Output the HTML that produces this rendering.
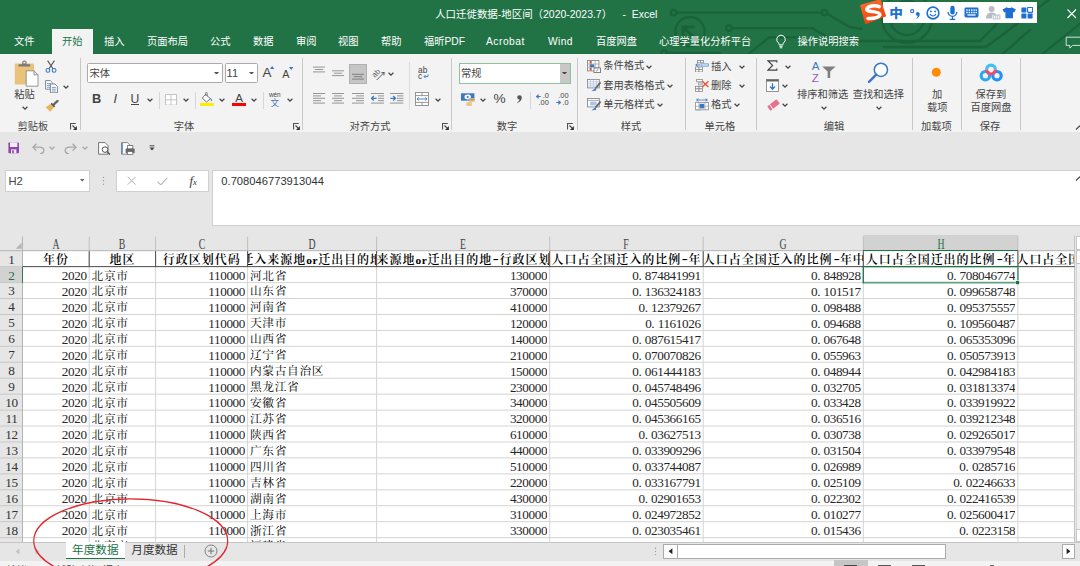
<!DOCTYPE html>
<html lang="zh-CN"><head><meta charset="utf-8"><title>人口迁徙数据-地区间（2020-2023.7） - Excel</title>
<style>
html,body{margin:0;padding:0;background:#e6e6e6;}
body{width:1080px;height:566px;overflow:hidden;}
#app{position:relative;width:1080px;height:566px;overflow:hidden;background:#e6e6e6;font-family:"Liberation Sans","Noto Sans CJK SC",sans-serif;font-size:10.4px;color:#444;}
.a{position:absolute;display:block;}
.t{position:absolute;display:block;white-space:nowrap;line-height:16px;height:16px;}
.u{font-size:10.25px;color:#444;}
.w{font-size:10.25px;color:#fff;}
.g{font-size:10.25px;color:#217346;}
.s{font-family:"Liberation Serif","Noto Serif CJK SC",serif;font-size:12.2px;color:#000;}
.sh{font-family:"Liberation Serif","Noto Serif CJK SC",serif;font-size:12.2px;color:#444;}
.cell{position:absolute;overflow:hidden;white-space:nowrap;font-family:"Liberation Serif","Noto Serif CJK SC",serif;font-size:11.7px;letter-spacing:0.7px;color:#000;line-height:16px;height:15.94px;}
.r{text-align:right;}
.c{text-align:center;}
.b{font-weight:600;font-size:12px;letter-spacing:0.97px;}
.n{text-align:right;font-size:13.2px;letter-spacing:-0.4px;color:#262626;}
.p{display:inline-block;width:6.4px;text-align:left;}
.l{display:inline-block;position:relative;top:-1.1px;letter-spacing:0;padding:0 1.7px;transform:scaleX(1.5);}
.l0{letter-spacing:0.6px;font-weight:bold;font-size:11.4px;}

</style></head>
<body>
<div id="app">
<div class="a" style="left:0px;top:0px;width:1080px;height:54.3px;background:#217346;"></div>
<svg class="a" style="left:0px;top:0px" width="1080" height="54.5" viewBox="0 0 1080 54.5">
<g fill="none" stroke="#1a6239" stroke-width="2.3" stroke-linecap="round" stroke-linejoin="round">
<path d="M676.6 12.6 H821.4"/><circle cx="673.6" cy="12.6" r="2.8"/><circle cx="824.4" cy="12.6" r="2.8"/>
<path d="M827 13.6 L846 25 Q852 28.6 862 28.6"/>
<path d="M732 28.1 H812 L834 41 H980 L1012 8"/><circle cx="729" cy="28.1" r="2.8"/>
<circle cx="690" cy="31.6" r="14.6"/>
<path d="M746 56 L769 37.4 H800"/>
<path d="M667 53 H720"/><circle cx="664" cy="53" r="2.6"/>
<circle cx="907" cy="18" r="25"/><circle cx="907" cy="18" r="17"/>
<path d="M884 47 H986 L1054 -4"/>
<path d="M1040 56 L1082 22"/>
<path d="M1000 56 L1030 30"/>
</g>
<path d="M683 27 H693 M683 27 V37 M683.6 27.6 L696 39" stroke="#1a6239" stroke-width="3" fill="none" stroke-linecap="square"/>
<circle cx="914.6" cy="22.6" r="2.6" fill="#2a7d50"/>
</svg>
<span class="t w" style="left:435.2px;top:7.4px;font-size:10.45px;">人口迁徙数据-地区间（2020-2023.7）<span style="padding-left:4.6px">&nbsp; - &nbsp;</span>Excel</span>
<div class="a" style="left:52px;top:29px;width:41px;height:26px;background:#f3f3f3;"></div>
<span class="t w" style="left:14px;top:34.2px;">文件</span>
<span class="t w" style="left:104px;top:34.2px;">插入</span>
<span class="t w" style="left:147px;top:34.2px;">页面布局</span>
<span class="t w" style="left:210px;top:34.2px;">公式</span>
<span class="t w" style="left:253px;top:34.2px;">数据</span>
<span class="t w" style="left:296px;top:34.2px;">审阅</span>
<span class="t w" style="left:338px;top:34.2px;">视图</span>
<span class="t w" style="left:381px;top:34.2px;">帮助</span>
<span class="t w" style="left:424px;top:34.2px;">福昕PDF</span>
<span class="t w" style="left:486px;top:34.2px;"><span style="letter-spacing:0.5px">Acrobat</span></span>
<span class="t w" style="left:548px;top:34.2px;"><span style="letter-spacing:0.4px">Wind</span></span>
<span class="t w" style="left:596px;top:34.2px;">百度网盘</span>
<span class="t w" style="left:659px;top:34.2px;">心理学量化分析平台</span>
<span class="t w" style="left:797.5px;top:34.2px;">操作说明搜索</span>
<span class="t g" style="left:62px;top:34.2px;">开始</span>
<svg class="a" style="left:774px;top:33px" width="14" height="18" viewBox="0 0 14 18"><path d="M7 2.2a4.3 4.3 0 0 0-2.6 7.7c.5.5.8 1.2.8 2h3.6c0-.8.3-1.5.8-2A4.3 4.3 0 0 0 7 2.2z M5.4 13.3h3.2 M5.8 14.8h2.4" fill="none" stroke="#fff" stroke-width="1"/></svg>
<svg class="a" style="left:1064.6px;top:35.6px" width="19" height="15" viewBox="0 0 19 15"><path d="M1.2 1.2 H18.5 V9.4 H7.6 L4.8 12 V9.4 H1.2 Z" fill="none" stroke="#e4efe8" stroke-width="0.9"/></svg>
<svg class="a" style="left:1066px;top:8px" width="12" height="12" viewBox="0 0 12 12"><path d="M1.5 1.5 L10 10 M10 1.5 L1.5 10" stroke="#fff" stroke-width="1.1" fill="none"/></svg>
<div class="a" style="left:882.5px;top:2px;width:154.5px;height:21px;background:#fff;"></div>
<svg class="a" style="left:858px;top:0px" width="30" height="25" viewBox="0 0 30 25"><defs><linearGradient id="sg" x1="0" y1="0" x2="0.4" y2="1"><stop offset="0" stop-color="#ff6d2e"/><stop offset="1" stop-color="#ee4510"/></linearGradient></defs>
<path d="M3.6 5.8 L21.8 0.8 L26.6 15.6 L8.2 22.6Z" fill="url(#sg)" stroke="url(#sg)" stroke-width="2.6" stroke-linejoin="round"/>
<path d="M21.2 6.6 C17 4.8 10 5.8 8.8 9 C7.8 12.4 20.8 10.8 21.8 14.2 C22.6 17.4 15 18.8 10 18.4" fill="none" stroke="#fff" stroke-width="3.5" stroke-linecap="round"/></svg>
<span class="t " style="left:745.5px;width:300px;text-align:center;top:5.9px;font-size:12.4px;font-weight:900;color:#1d6fd1;transform:scaleX(1.1);">中</span>
<svg class="a" style="left:908.8px;top:7px" width="13" height="14" viewBox="0 0 13 14"><circle cx="3.2" cy="4.2" r="1.6" fill="none" stroke="#1d6fd1" stroke-width="1.1"/><path d="M6.8 6.9 a2 2 0 1 1 3.9 .8 c-.4 2-1.5 3.4-3.6 4.3 c1.1-1.2 1.6-2.3 1.5-3.2 a2 2 0 0 1-1.8-1.9z" fill="#1d6fd1"/></svg>
<svg class="a" style="left:926.3px;top:6.3px" width="14" height="14" viewBox="0 0 14 14"><circle cx="7" cy="7" r="5.9" fill="none" stroke="#1d6fd1" stroke-width="1.6"/><circle cx="4.9" cy="5.4" r="0.95" fill="#1d6fd1"/><circle cx="9.1" cy="5.4" r="0.95" fill="#1d6fd1"/><path d="M3.9 8.2 Q7 11.8 10.1 8.2" fill="none" stroke="#1d6fd1" stroke-width="1.2"/></svg>
<svg class="a" style="left:946px;top:4.5px" width="13" height="16" viewBox="0 0 13 16"><rect x="4.3" y="0.8" width="4.4" height="8.6" rx="2.2" fill="#1d6fd1"/><path d="M2.2 7 a4.3 4.3 0 0 0 8.6 0 M6.5 11.4 V14 M3.8 14.4 H9.2" fill="none" stroke="#1d6fd1" stroke-width="1.3"/></svg>
<svg class="a" style="left:964px;top:7px" width="15" height="11" viewBox="0 0 15 11"><rect x="0.5" y="0.5" width="14" height="10" rx="1.4" fill="#1d6fd1"/><g fill="#fff"><rect x="2.2" y="2.4" width="1.5" height="1.4"/><rect x="4.6" y="2.4" width="1.5" height="1.4"/><rect x="7" y="2.4" width="1.5" height="1.4"/><rect x="9.4" y="2.4" width="1.5" height="1.4"/><rect x="11.6" y="2.4" width="1.3" height="1.4"/><rect x="2.2" y="4.8" width="1.5" height="1.4"/><rect x="4.6" y="4.8" width="1.5" height="1.4"/><rect x="7" y="4.8" width="1.5" height="1.4"/><rect x="9.4" y="4.8" width="1.5" height="1.4"/><rect x="11.6" y="4.8" width="1.3" height="1.4"/><rect x="3.4" y="7.3" width="8.2" height="1.3"/></g></svg>
<svg class="a" style="left:984px;top:5px" width="17" height="15" viewBox="0 0 17 15"><circle cx="7.6" cy="4" r="3" fill="#b9bcc2"/><path d="M2 13.5 C2 9 5 7.6 7.6 7.6 C10.2 7.6 12 8.6 12.6 10 H8 V13.5Z" fill="#b9bcc2"/><rect x="8.6" y="9.6" width="8" height="5" rx="0.8" fill="#c9ccd1"/><path d="M10.5 11 v2.4 M12.6 11 v2.4 M14.6 11 v2.4" stroke="#fff" stroke-width="0.9"/></svg>
<svg class="a" style="left:1001.8px;top:5.6px" width="14.4" height="13.6" viewBox="0 0 16 14"><path d="M5.3 0.8 Q8 2.8 10.7 0.8 L15.4 3.4 L13.6 6.8 L12.2 6.1 V13 H3.8 V6.1 L2.4 6.8 L0.6 3.4Z" fill="#1d6fd1"/></svg>
<svg class="a" style="left:1021px;top:6.5px" width="12" height="12" viewBox="0 0 12 12"><rect x="0.4" y="0.4" width="5" height="5" rx="0.6" fill="#1d6fd1"/><rect x="6.6" y="0.4" width="5" height="5" rx="0.6" fill="none" stroke="#1d6fd1" stroke-width="1.1"/><rect x="0.4" y="6.6" width="5" height="5" rx="0.6" fill="#1d6fd1"/><rect x="6.6" y="6.6" width="5" height="5" rx="0.6" fill="#1d6fd1"/></svg>
<div class="a" style="left:0px;top:54.3px;width:1080px;height:78.2px;background:#f3f3f3;"></div>
<div class="a" style="left:80.0px;top:57.5px;width:1px;height:72.5px;background:#c8c8c8;"></div>
<div class="a" style="left:302.0px;top:57.5px;width:1px;height:72.5px;background:#c8c8c8;"></div>
<div class="a" style="left:451.25px;top:57.5px;width:1px;height:72.5px;background:#c8c8c8;"></div>
<div class="a" style="left:577.0px;top:57.5px;width:1px;height:72.5px;background:#c8c8c8;"></div>
<div class="a" style="left:685.25px;top:57.5px;width:1px;height:72.5px;background:#c8c8c8;"></div>
<div class="a" style="left:755.75px;top:57.5px;width:1px;height:72.5px;background:#c8c8c8;"></div>
<div class="a" style="left:912.0px;top:57.5px;width:1px;height:72.5px;background:#c8c8c8;"></div>
<div class="a" style="left:960.75px;top:57.5px;width:1px;height:72.5px;background:#c8c8c8;"></div>
<div class="a" style="left:1019.5px;top:57.5px;width:1px;height:72.5px;background:#c8c8c8;"></div>
<div class="a" style="left:409px;top:62px;width:1px;height:48px;background:#dcdcdc;"></div>
<span class="t u" style="left:-117px;width:300px;text-align:center;top:119.1px;">剪贴板</span>
<span class="t u" style="left:34px;width:300px;text-align:center;top:119.1px;">字体</span>
<span class="t u" style="left:220px;width:300px;text-align:center;top:119.1px;">对齐方式</span>
<span class="t u" style="left:357px;width:300px;text-align:center;top:119.1px;">数字</span>
<span class="t u" style="left:481px;width:300px;text-align:center;top:119.1px;">样式</span>
<span class="t u" style="left:570px;width:300px;text-align:center;top:119.1px;">单元格</span>
<span class="t u" style="left:684px;width:300px;text-align:center;top:119.1px;">编辑</span>
<span class="t u" style="left:786.5px;width:300px;text-align:center;top:119.1px;">加载项</span>
<span class="t u" style="left:840px;width:300px;text-align:center;top:119.1px;">保存</span>
<svg class="a" style="left:70.2px;top:123px" width="7.2" height="7.2" viewBox="0 0 7.2 7.2"><path d="M0.55 6.6 V0.55 H5.8" fill="none" stroke="#505050" stroke-width="1.1"/><path d="M2.5 2.5 L5.2 5.2" fill="none" stroke="#444" stroke-width="1.2"/><path d="M6.9 3 V6.9 H3Z" fill="#333"/></svg>
<svg class="a" style="left:293.0px;top:123px" width="7.2" height="7.2" viewBox="0 0 7.2 7.2"><path d="M0.55 6.6 V0.55 H5.8" fill="none" stroke="#505050" stroke-width="1.1"/><path d="M2.5 2.5 L5.2 5.2" fill="none" stroke="#444" stroke-width="1.2"/><path d="M6.9 3 V6.9 H3Z" fill="#333"/></svg>
<svg class="a" style="left:441.9px;top:123px" width="7.2" height="7.2" viewBox="0 0 7.2 7.2"><path d="M0.55 6.6 V0.55 H5.8" fill="none" stroke="#505050" stroke-width="1.1"/><path d="M2.5 2.5 L5.2 5.2" fill="none" stroke="#444" stroke-width="1.2"/><path d="M6.9 3 V6.9 H3Z" fill="#333"/></svg>
<svg class="a" style="left:567.4px;top:123px" width="7.2" height="7.2" viewBox="0 0 7.2 7.2"><path d="M0.55 6.6 V0.55 H5.8" fill="none" stroke="#505050" stroke-width="1.1"/><path d="M2.5 2.5 L5.2 5.2" fill="none" stroke="#444" stroke-width="1.2"/><path d="M6.9 3 V6.9 H3Z" fill="#333"/></svg>
<svg class="a" style="left:1074.6px;top:124.4px" width="9" height="7" viewBox="0 0 9 7"><path d="M1 5.5 L4.5 2 L8 5.5" fill="none" stroke="#444" stroke-width="1.1"/></svg>
<svg class="a" style="left:14px;top:60px" width="25" height="27" viewBox="0 0 25 27"><rect x="0.8" y="3.6" width="19.2" height="20.8" rx="1" fill="#eac27a"/>
<path d="M4.6 6.6 V4.2 H8.2 V2.2 Q8.2 0.6 10.4 0.6 Q12.6 0.6 12.6 2.2 V4.2 H16.2 V6.6Z" fill="#7a7a7a"/><rect x="9.4" y="1.8" width="2" height="1.6" fill="#f3f3f3"/>
<path d="M12.2 10.8 H20 L24 14.8 V26.2 H12.2Z" fill="#fff" stroke="#8a8a8a" stroke-width="0.9"/><path d="M20 10.8 V14.8 H24" fill="none" stroke="#8a8a8a" stroke-width="0.9"/></svg>
<span class="t u" style="left:-125.6px;width:300px;text-align:center;top:87.2px;">粘贴</span>
<svg class="a" style="left:21.1px;top:104.7px" width="8" height="6" viewBox="0 0 8 6"><path d="M1.6 1.8 L4 4.2 L6.4 1.8" fill="none" stroke="#444" stroke-width="1.25"/></svg>
<svg class="a" style="left:44.5px;top:60px" width="12" height="13" viewBox="0 0 12 13"><path d="M2.6 0.6 L8.2 9 M9.4 0.6 L3.8 9" stroke="#555" stroke-width="1.1" fill="none"/>
<circle cx="2.9" cy="10.4" r="1.9" fill="none" stroke="#3b78c4" stroke-width="1.1"/><circle cx="9.1" cy="10.4" r="1.9" fill="none" stroke="#3b78c4" stroke-width="1.1"/></svg>
<svg class="a" style="left:44.5px;top:79.8px" width="13" height="13.4" viewBox="0 0 13 13.4"><path d="M0.6 0.6 H5.2 L7.6 3 V9.2 H0.6Z" fill="#fff" stroke="#777" stroke-width="0.9"/>
<path d="M2 3.6 H5.8 M2 5.4 H5.8 M2 7.2 H5.8" stroke="#4a86d0" stroke-width="0.8"/>
<path d="M5.4 4 H10 L12.4 6.4 V12.8 H5.4Z" fill="#fff" stroke="#777" stroke-width="0.9"/>
<path d="M6.8 7.4 H10.8 M6.8 9.2 H10.8 M6.8 11 H10.8" stroke="#4a86d0" stroke-width="0.8"/></svg>
<svg class="a" style="left:62px;top:84.2px" width="8" height="6" viewBox="0 0 8 6"><path d="M1.6 1.8 L4 4.2 L6.4 1.8" fill="none" stroke="#444" stroke-width="1.25"/></svg>
<svg class="a" style="left:44.5px;top:100px" width="14" height="12.5" viewBox="0 0 14 12.5"><path d="M8.6 4.6 L12.6 0.9" stroke="#666" stroke-width="2.2" stroke-linecap="round"/>
<path d="M6.2 3.4 L9.6 6.8" stroke="#555" stroke-width="1.8"/>
<path d="M5.4 4 L9 7.6 L5.2 11.8 L0.6 7.2Z" fill="#eab45f"/></svg>
<div class="a" style="left:87.4px;top:63.3px;width:135.8px;height:20.2px;background:#fff;border:1px solid #ababab;box-sizing:border-box;border-radius:1.5px;"></div>
<span class="t u" style="left:89.4px;top:65.6px;">宋体</span>
<svg class="a" style="left:214.4px;top:71.6px" width="5" height="2.8" viewBox="0 0 5 2.8"><path d="M0 0 H5 L2.5 2.8 Z" fill="#555"/></svg>
<div class="a" style="left:224.9px;top:63.3px;width:32.7px;height:20.2px;background:#fff;border:1px solid #ababab;box-sizing:border-box;border-radius:1.5px;"></div>
<span class="t u" style="left:226.6px;top:65.4px;font-size:11px;">11</span>
<svg class="a" style="left:248.5px;top:71.6px" width="5" height="2.8" viewBox="0 0 5 2.8"><path d="M0 0 H5 L2.5 2.8 Z" fill="#555"/></svg>
<span class="t u" style="left:117px;width:300px;text-align:center;top:65.4px;font-size:13.4px;">A</span>
<svg class="a" style="left:269.6px;top:66.4px" width="4.4" height="3" viewBox="0 0 4.4 3"><path d="M0 3 L2.2 0 L4.4 3Z" fill="#3b78c4"/></svg>
<span class="t u" style="left:135.8px;width:300px;text-align:center;top:66.2px;font-size:10.8px;">A</span>
<svg class="a" style="left:288.8px;top:66.6px" width="4.4" height="3" viewBox="0 0 4.4 3"><path d="M0 0 L2.2 3 L4.4 0Z" fill="#3b78c4"/></svg>
<span class="t u" style="left:-53.400000000000006px;width:300px;text-align:center;top:91.2px;font-size:12.8px;font-weight:bold;">B</span>
<span class="t u" style="left:-34.7px;width:300px;text-align:center;top:91.2px;font-size:12.8px;font-style:italic;">I</span>
<span class="t u" style="left:-15.199999999999989px;width:300px;text-align:center;top:90.9px;font-size:12.2px;">U</span>
<div class="a" style="left:130.9px;top:103.8px;width:7.8px;height:1px;background:#444;"></div>
<svg class="a" style="left:146.2px;top:97px" width="8" height="6" viewBox="0 0 8 6"><path d="M1.6 1.8 L4 4.2 L6.4 1.8" fill="none" stroke="#444" stroke-width="1.25"/></svg>
<div class="a" style="left:159.2px;top:91.5px;width:1px;height:17px;background:#d6d6d6;"></div>
<svg class="a" style="left:165px;top:93.5px" width="12" height="11.6" viewBox="0 0 12 11.6"><rect x="0.5" y="0.5" width="11" height="10.6" fill="#fff" stroke="#c4c4c4" stroke-width="1"/><path d="M6 0.5 V11.1 M0.5 5.8 H11.5" stroke="#c4c4c4" stroke-width="1"/></svg>
<svg class="a" style="left:182px;top:97px" width="8" height="6" viewBox="0 0 8 6"><path d="M1.6 1.8 L4 4.2 L6.4 1.8" fill="none" stroke="#444" stroke-width="1.25"/></svg>
<div class="a" style="left:195.2px;top:91.5px;width:1px;height:17px;background:#d6d6d6;"></div>
<svg class="a" style="left:200px;top:92px" width="14" height="14.2" viewBox="0 0 14 14.2"><path d="M5.4 2.4 L10.4 6.6 L6.6 10 L2.2 6.2Z" fill="#fff" stroke="#666" stroke-width="0.9"/>
<path d="M5.6 3.6 V1.2 Q5.6 0.4 6.4 0.4 Q7.2 0.4 7.2 1.2 V4" fill="none" stroke="#666" stroke-width="0.8"/>
<path d="M10.6 5.4 Q12.6 7.6 11.4 9.4 Q10.2 8.6 10.6 5.4Z" fill="#3b78c4"/>
<rect x="0" y="11" width="13.8" height="3" fill="#ffed00"/></svg>
<svg class="a" style="left:217.8px;top:97px" width="8" height="6" viewBox="0 0 8 6"><path d="M1.6 1.8 L4 4.2 L6.4 1.8" fill="none" stroke="#444" stroke-width="1.25"/></svg>
<span class="t u" style="left:89.1px;width:300px;text-align:center;top:89.6px;font-size:11.6px;">A</span>
<div class="a" style="left:232px;top:103px;width:13.8px;height:3px;background:#f00;"></div>
<svg class="a" style="left:249.6px;top:97px" width="8" height="6" viewBox="0 0 8 6"><path d="M1.6 1.8 L4 4.2 L6.4 1.8" fill="none" stroke="#444" stroke-width="1.25"/></svg>
<div class="a" style="left:262.6px;top:91.5px;width:1px;height:17px;background:#d6d6d6;"></div>
<span class="t u" style="left:124.80000000000001px;width:300px;text-align:center;top:87.0px;font-size:6.4px;">wén</span>
<span class="t " style="left:124.69999999999999px;width:300px;text-align:center;top:94.9px;font-size:8.6px;color:#3b78c4;">文</span>
<svg class="a" style="left:285.6px;top:97px" width="8" height="6" viewBox="0 0 8 6"><path d="M1.6 1.8 L4 4.2 L6.4 1.8" fill="none" stroke="#444" stroke-width="1.25"/></svg>
<svg class="a" style="left:313px;top:64px" width="12" height="20" viewBox="0 0 12 20"><path d="M0 3.1 H12 M1.8 5.5 H10.2 M0 7.9 H12 " stroke="#8a8a8a" stroke-width="0.9" fill="none"/></svg>
<svg class="a" style="left:332.4px;top:64px" width="12" height="20" viewBox="0 0 12 20"><path d="M0 6.8 H12 M1.8 9.2 H10.2 M0 11.6 H12 " stroke="#8a8a8a" stroke-width="0.9" fill="none"/></svg>
<div class="a" style="left:348.5px;top:64.2px;width:18.4px;height:19.5px;background:#c6c6c6;border:1px solid #b0b0b0;box-sizing:border-box;"></div>
<svg class="a" style="left:351.8px;top:64px" width="12" height="20" viewBox="0 0 12 20"><path d="M0 10.3 H12 M1.8 12.7 H10.2 M0 15.1 H12 " stroke="#777" stroke-width="0.9" fill="none"/></svg>
<svg class="a" style="left:371px;top:66px" width="14" height="14" viewBox="0 0 14 14"><g transform="rotate(-45 7 7)"><text x="1.2" y="8.2" font-family="Liberation Sans,sans-serif" font-size="7.6" fill="#555">ab</text><path d="M0.5 11 H11.5 M9.5 9.2 L11.8 11 L9.5 12.8" stroke="#555" stroke-width="0.9" fill="none"/></g></svg>
<svg class="a" style="left:386.5px;top:71px" width="8" height="6" viewBox="0 0 8 6"><path d="M1.6 1.8 L4 4.2 L6.4 1.8" fill="none" stroke="#444" stroke-width="1.25"/></svg>
<svg class="a" style="left:313px;top:93.2px" width="12" height="11" viewBox="0 0 12 11"><path d="M0 0.5 H12 M0 2.9 H8 M0 5.3 H12 M0 7.7 H8 M0 10.1 H12 " stroke="#8a8a8a" stroke-width="0.9" fill="none"/></svg>
<svg class="a" style="left:332.4px;top:93.2px" width="12" height="11" viewBox="0 0 12 11"><path d="M0 0.5 H12 M2 2.9 H10 M0 5.3 H12 M2 7.7 H10 M0 10.1 H12 " stroke="#8a8a8a" stroke-width="0.9" fill="none"/></svg>
<svg class="a" style="left:351.8px;top:93.2px" width="12" height="11" viewBox="0 0 12 11"><path d="M0 0.5 H12 M4 2.9 H12 M0 5.3 H12 M4 7.7 H12 M0 10.1 H12 " stroke="#8a8a8a" stroke-width="0.9" fill="none"/></svg>
<svg class="a" style="left:371px;top:93.2px" width="13.4" height="11" viewBox="0 0 13.4 11"><path d="M0 0.5 H13.4 M7 2.9 H13.4 M7 5.3 H13.4 M7 7.7 H13.4 M0 10.1 H13.4 " stroke="#8a8a8a" stroke-width="0.9" fill="none"/><path d="M0.6 5.3 H5.6 M2.8 3 L0.5 5.3 L2.8 7.6" stroke="#3b78c4" stroke-width="1.3" fill="none"/></svg>
<svg class="a" style="left:390.4px;top:93.2px" width="13.4" height="11" viewBox="0 0 13.4 11"><path d="M0 0.5 H13.4 M7 2.9 H13.4 M7 5.3 H13.4 M7 7.7 H13.4 M0 10.1 H13.4 " stroke="#8a8a8a" stroke-width="0.9" fill="none"/><path d="M0.4 5.3 H5.4 M3.2 3 L5.5 5.3 L3.2 7.6" stroke="#3b78c4" stroke-width="1.3" fill="none"/></svg>
<span class="t u" style="left:418px;top:62.3px;font-size:8.4px;">ab</span>
<span class="t u" style="left:418px;top:68.2px;font-size:8.4px;">c</span>
<svg class="a" style="left:423px;top:73.5px" width="6" height="5" viewBox="0 0 6 5"><path d="M5 0.3 V2.6 H1 M2.6 1 L1 2.6 L2.6 4.2" stroke="#3b78c4" stroke-width="0.9" fill="none"/></svg>
<svg class="a" style="left:415.2px;top:92px" width="14" height="14" viewBox="0 0 14 14"><rect x="0.5" y="0.5" width="13" height="13" fill="#fff" stroke="#8a8a8a" stroke-width="0.9"/><path d="M0.5 3.6 H13.5 M0.5 10.4 H13.5 M7 0.5 V3.6 M7 10.4 V13.5" stroke="#8a8a8a" stroke-width="0.9"/><path d="M2 7 H12 M3.8 5.4 L2 7 L3.8 8.6 M10.2 5.4 L12 7 L10.2 8.6" stroke="#3b78c4" stroke-width="0.9" fill="none"/></svg>
<svg class="a" style="left:433.5px;top:97px" width="8" height="6" viewBox="0 0 8 6"><path d="M1.6 1.8 L4 4.2 L6.4 1.8" fill="none" stroke="#444" stroke-width="1.25"/></svg>
<div class="a" style="left:459.1px;top:63.2px;width:111.6px;height:20.5px;background:#fff;border:1px solid #8cc3a3;box-sizing:border-box;"></div>
<div class="a" style="left:560px;top:64.2px;width:9.8px;height:18.5px;background:#c8c8c8;"></div>
<svg class="a" style="left:562.1px;top:71.6px" width="5" height="2.8" viewBox="0 0 5 2.8"><path d="M0 0 H5 L2.5 2.8 Z" fill="#444"/></svg>
<span class="t u" style="left:461px;top:65.9px;">常规</span>
<svg class="a" style="left:461px;top:93px" width="14" height="13" viewBox="0 0 14 13"><rect x="0" y="0.3" width="13.4" height="7.4" fill="#3b78c4"/><ellipse cx="6.7" cy="4" rx="3.2" ry="2.4" fill="#fff"/><circle cx="6.7" cy="4" r="1.1" fill="#3b78c4"/><rect x="8.2" y="5.2" width="5.4" height="1.5" fill="#e8b866"/><rect x="8.2" y="7.2" width="5.4" height="1.5" fill="#e8b866"/><rect x="5.4" y="9.2" width="5.4" height="1.5" fill="#e8b866"/><rect x="5.4" y="11.2" width="5.4" height="1.5" fill="#e8b866"/></svg>
<svg class="a" style="left:479px;top:97px" width="8" height="6" viewBox="0 0 8 6"><path d="M1.6 1.8 L4 4.2 L6.4 1.8" fill="none" stroke="#444" stroke-width="1.25"/></svg>
<span class="t u" style="left:349.6px;width:300px;text-align:center;top:91.2px;font-size:13.6px;">%</span>
<svg class="a" style="left:516.4px;top:95px" width="6.4" height="8.4" viewBox="0 0 6.4 8.4"><path d="M3.4 0.2 a2.3 2.3 0 0 1 2.4 2.4 c0 2.4-1.6 4.4-4.4 5.4 l-.3-.6 c1.5-.8 2.4-1.8 2.4-2.9 a2.3 2.3 0 0 1-2.3-2.1 a2.2 2.2 0 0 1 2.2-2.2z" fill="#555"/></svg>
<div class="a" style="left:530px;top:91.5px;width:1px;height:17px;background:#d6d6d6;"></div>
<span class="t u" style="left:348.79999999999995px;width:200px;text-align:right;top:88px;font-size:7.4px;">.0</span>
<span class="t u" style="left:348.79999999999995px;width:200px;text-align:right;top:94.8px;font-size:7.4px;">.00</span>
<svg class="a" style="left:536.4px;top:93.6px" width="5" height="5" viewBox="0 0 5 5"><path d="M0.6 2.5 H4.8 M2.6 0.6 L0.6 2.5 L2.6 4.4" stroke="#3b78c4" stroke-width="1.2" fill="none"/></svg>
<span class="t u" style="left:368.6px;width:200px;text-align:right;top:88px;font-size:7.4px;">.00</span>
<span class="t u" style="left:368.6px;width:200px;text-align:right;top:94.8px;font-size:7.4px;">.0</span>
<svg class="a" style="left:555.6px;top:100.4px" width="5" height="5" viewBox="0 0 5 5"><path d="M0.2 2.5 H4.4 M2.4 0.6 L4.4 2.5 L2.4 4.4" stroke="#3b78c4" stroke-width="1.2" fill="none"/></svg>
<svg class="a" style="left:587.2px;top:59.6px" width="14" height="13" viewBox="0 0 14 13"><rect x="0.5" y="0.5" width="11.4" height="10.4" fill="#fff" stroke="#8a8a8a" stroke-width="0.9"/><path d="M4.4 0.5 V10.9 M8.2 0.5 V10.9 M0.5 4 H11.9 M0.5 7.4 H11.9" stroke="#9a9a9a" stroke-width="0.7"/><rect x="2.6" y="0.9" width="1.8" height="2.6" fill="#e8502d"/><rect x="2.6" y="4.4" width="4.6" height="2.6" fill="#3b78c4"/><rect x="2.6" y="7.8" width="1.8" height="2.6" fill="#e8502d"/><rect x="7" y="8" width="6.4" height="4.6" fill="#fff" stroke="#666" stroke-width="0.8"/><path d="M9.2 11.2 L11.2 9.4" stroke="#444" stroke-width="0.8"/></svg>
<span class="t u" style="left:603.3px;top:58.2px;">条件格式</span>
<svg class="a" style="left:645.3px;top:63.599999999999994px" width="8" height="6" viewBox="0 0 8 6"><path d="M1.6 1.8 L4 4.2 L6.4 1.8" fill="none" stroke="#444" stroke-width="1.25"/></svg>
<svg class="a" style="left:587.2px;top:79.2px" width="14.4" height="12.6" viewBox="0 0 14.4 12.6"><rect x="0.5" y="0.5" width="11.8" height="8.4" fill="#fff" stroke="#8a8a8a" stroke-width="0.9"/><path d="M3.4 0.5 V8.9 M6.4 0.5 V8.9 M9.4 0.5 V8.9 M0.5 2.8 H12.3 M0.5 4.9 H12.3 M0.5 7 H12.3" stroke="#a9bfdc" stroke-width="0.7"/><path d="M13.6 3.4 L8.6 9.2" stroke="#666" stroke-width="1.7"/><path d="M8.8 8.8 L4.4 12.2 L9.2 11.6Z" fill="#3b78c4"/></svg>
<span class="t u" style="left:603.3px;top:77.6px;">套用表格格式</span>
<svg class="a" style="left:666px;top:83px" width="8" height="6" viewBox="0 0 8 6"><path d="M1.6 1.8 L4 4.2 L6.4 1.8" fill="none" stroke="#444" stroke-width="1.25"/></svg>
<svg class="a" style="left:587.2px;top:98px" width="14.4" height="12.8" viewBox="0 0 14.4 12.8"><rect x="0.5" y="0.5" width="11.8" height="8.4" fill="#fff" stroke="#8a8a8a" stroke-width="0.9"/><path d="M0.5 2.4 H12.3" stroke="#8a8a8a" stroke-width="0.7"/><rect x="3" y="3.6" width="6.6" height="3.8" fill="#a9c6ea"/><path d="M13.6 3.6 L8.6 9.4" stroke="#666" stroke-width="1.7"/><path d="M8.8 9 L4.4 12.4 L9.2 11.8Z" fill="#3b78c4"/></svg>
<span class="t u" style="left:603.3px;top:96.7px;">单元格样式</span>
<svg class="a" style="left:655.9px;top:102.1px" width="8" height="6" viewBox="0 0 8 6"><path d="M1.6 1.8 L4 4.2 L6.4 1.8" fill="none" stroke="#444" stroke-width="1.25"/></svg>
<svg class="a" style="left:694.6px;top:59.6px" width="14" height="12.4" viewBox="0 0 14 12.4"><g fill="#fff" stroke="#8a8a8a" stroke-width="0.8"><rect x="2.4" y="0.4" width="3" height="2.4"/><rect x="5.4" y="0.4" width="3" height="2.4"/><rect x="0.4" y="7" width="3.6" height="2.5"/><rect x="4" y="7" width="3.6" height="2.5"/><rect x="0.4" y="9.5" width="3.6" height="2.5"/><rect x="4" y="9.5" width="3.6" height="2.5"/></g><rect x="6" y="3.8" width="7.4" height="2.4" fill="#cfe0f5" stroke="#6a9ad6" stroke-width="0.8"/><path d="M0.8 5 H5 M2.6 3.4 L0.8 5 L2.6 6.6" stroke="#3b78c4" stroke-width="1" fill="none"/></svg>
<span class="t u" style="left:711.1px;top:58.900000000000006px;">插入</span>
<svg class="a" style="left:738.2px;top:63.900000000000006px" width="8" height="6" viewBox="0 0 8 6"><path d="M1.6 1.8 L4 4.2 L6.4 1.8" fill="none" stroke="#444" stroke-width="1.25"/></svg>
<svg class="a" style="left:694.6px;top:79px" width="14" height="12.6" viewBox="0 0 14 12.6"><g fill="#fff" stroke="#8a8a8a" stroke-width="0.8"><rect x="1.6" y="0.4" width="6" height="2.4"/><rect x="0.4" y="7.4" width="3.6" height="2.5"/><rect x="4" y="7.4" width="3.6" height="2.5"/><rect x="0.4" y="9.9" width="3.6" height="2.5"/><rect x="4" y="9.9" width="3.6" height="2.5"/></g><rect x="3.4" y="3.8" width="4" height="2.2" fill="#cfe0f5" stroke="#8a8a8a" stroke-width="0.6"/><path d="M7.4 2.2 L13.4 8 M13.4 2.2 L7.4 8" stroke="#e8502d" stroke-width="1.2"/></svg>
<span class="t u" style="left:711.1px;top:78px;">删除</span>
<svg class="a" style="left:738.2px;top:83.2px" width="8" height="6" viewBox="0 0 8 6"><path d="M1.6 1.8 L4 4.2 L6.4 1.8" fill="none" stroke="#444" stroke-width="1.25"/></svg>
<svg class="a" style="left:694.6px;top:98px" width="14" height="13.4" viewBox="0 0 14 13.4"><path d="M2 2 H12 M2 0.6 V3.4 M12 0.6 V3.4 M3.6 0.8 L2.2 2 L3.6 3.2 M10.4 0.8 L11.8 2 L10.4 3.2" stroke="#3b78c4" stroke-width="0.8" fill="none"/><rect x="0.6" y="4.4" width="12.8" height="7.4" fill="#fff" stroke="#8a8a8a" stroke-width="0.8"/><path d="M4 4.4 V11.8 M10 4.4 V11.8 M0.6 8.2 H13.4 M0.6 13 H6" stroke="#9a9a9a" stroke-width="0.7"/><rect x="4.6" y="5.8" width="4.6" height="4.6" fill="#3b78c4"/></svg>
<span class="t u" style="left:711.1px;top:96.7px;">格式</span>
<svg class="a" style="left:733.2px;top:102.1px" width="8" height="6" viewBox="0 0 8 6"><path d="M1.6 1.8 L4 4.2 L6.4 1.8" fill="none" stroke="#444" stroke-width="1.25"/></svg>
<svg class="a" style="left:767.2px;top:60.2px" width="11" height="11" viewBox="0 0 11 11"><path d="M9.8 2.6 V0.8 H0.9 L5.6 5.4 L0.9 10.2 H9.8 V8.4" fill="none" stroke="#444" stroke-width="1.2"/></svg>
<svg class="a" style="left:783.7px;top:63.900000000000006px" width="8" height="6" viewBox="0 0 8 6"><path d="M1.6 1.8 L4 4.2 L6.4 1.8" fill="none" stroke="#444" stroke-width="1.25"/></svg>
<svg class="a" style="left:766px;top:78.6px" width="13" height="13" viewBox="0 0 13 13"><rect x="0.5" y="0.5" width="12" height="12" fill="#fff" stroke="#8a8a8a" stroke-width="0.9"/><rect x="0.5" y="0.5" width="12" height="2" fill="#666"/><path d="M6.5 4.2 V10 M4 7.6 L6.5 10.2 L9 7.6" stroke="#3b78c4" stroke-width="1.4" fill="none"/></svg>
<svg class="a" style="left:781.3px;top:83.2px" width="8" height="6" viewBox="0 0 8 6"><path d="M1.6 1.8 L4 4.2 L6.4 1.8" fill="none" stroke="#444" stroke-width="1.25"/></svg>
<svg class="a" style="left:766.6px;top:98.6px" width="13" height="12" viewBox="0 0 13 12"><g transform="rotate(-38 6.5 6)"><rect x="0.6" y="3.2" width="11.8" height="5.6" rx="0.8" fill="#e8718d"/><rect x="3.2" y="3.2" width="0.9" height="5.6" fill="#f3f3f3"/></g></svg>
<svg class="a" style="left:781.3px;top:102.1px" width="8" height="6" viewBox="0 0 8 6"><path d="M1.6 1.8 L4 4.2 L6.4 1.8" fill="none" stroke="#444" stroke-width="1.25"/></svg>
<span class="t " style="left:665.6px;width:300px;text-align:center;top:58.400000000000006px;font-size:11.6px;color:#3b78c4;">A</span>
<span class="t " style="left:665.4px;width:300px;text-align:center;top:70.4px;font-size:11.6px;color:#9b59b6;">Z</span>
<svg class="a" style="left:821.6px;top:66.2px" width="14" height="12.4" viewBox="0 0 14 12.4"><path d="M0.2 0.4 H13.6 L8.2 5.6 V12 H5.6 V5.6Z" fill="#7f7f7f"/></svg>
<span class="t u" style="left:672.7px;width:300px;text-align:center;top:87.2px;">排序和筛选</span>
<svg class="a" style="left:820.2px;top:104.7px" width="8" height="6" viewBox="0 0 8 6"><path d="M1.6 1.8 L4 4.2 L6.4 1.8" fill="none" stroke="#444" stroke-width="1.25"/></svg>
<svg class="a" style="left:866px;top:61px" width="24" height="24" viewBox="0 0 24 24"><circle cx="14.9" cy="8.8" r="6.6" fill="#fff" stroke="#3b78c4" stroke-width="1.5"/><path d="M10.2 13.6 L3 20.8" stroke="#3b78c4" stroke-width="2.4" stroke-linecap="round"/></svg>
<span class="t u" style="left:728.3px;width:300px;text-align:center;top:87.2px;">查找和选择</span>
<svg class="a" style="left:875.3px;top:104.7px" width="8" height="6" viewBox="0 0 8 6"><path d="M1.6 1.8 L4 4.2 L6.4 1.8" fill="none" stroke="#444" stroke-width="1.25"/></svg>
<svg class="a" style="left:930px;top:65.5px" width="12.6" height="12.6" viewBox="0 0 12.6 12.6"><circle cx="6.3" cy="6.3" r="4.5" fill="#ff8c00"/></svg>
<span class="t u" style="left:787.2px;width:300px;text-align:center;top:87px;">加</span>
<span class="t u" style="left:787.2px;width:300px;text-align:center;top:99.9px;">载项</span>
<svg class="a" style="left:979px;top:62.5px" width="24" height="19" viewBox="0 0 24 19"><circle cx="6.4" cy="12.7" r="4.2" fill="none" stroke="#27a8f5" stroke-width="3.2"/><circle cx="18" cy="12.7" r="4.2" fill="none" stroke="#1e90ff" stroke-width="3.2"/><path d="M7.6 6.6 a4.4 4.4 0 0 1 8.8 0" fill="none" stroke="#3cc3f5" stroke-width="3.2"/><path d="M7.6 6.6 a4.4 4.4 0 0 0 8.8 0" fill="none" stroke="#f04d6a" stroke-width="3.2"/></svg>
<span class="t u" style="left:841px;width:300px;text-align:center;top:87px;">保存到</span>
<span class="t u" style="left:841px;width:300px;text-align:center;top:99.9px;">百度网盘</span>
<div class="a" style="left:0px;top:133.5px;width:1080px;height:102px;background:#e6e6e6;"></div>
<svg class="a" style="left:8px;top:142px" width="11.4" height="11.6" viewBox="0 0 11.4 11.6"><path d="M0.4 1.2 Q0.4 0.4 1.2 0.4 H10.2 Q11 0.4 11 1.2 V10.4 Q11 11.2 10.2 11.2 H1.2 Q0.4 11.2 0.4 10.4Z" fill="#8e44ad"/><rect x="2" y="0.4" width="7.4" height="4.6" fill="#f3eaf8"/><rect x="3" y="7.4" width="5.4" height="3.8" fill="#f3eaf8"/><rect x="4.2" y="8.2" width="1.6" height="3" fill="#8e44ad"/></svg>
<svg class="a" style="left:31.5px;top:142.5px" width="13" height="11.5" viewBox="0 0 13 11.5"><path d="M1 4.2 H7.4 Q11.8 4.2 11.8 7.6 Q11.8 10.6 8 10.8" fill="none" stroke="#a6a6a6" stroke-width="1.3"/><path d="M4.4 0.8 L1 4.2 L4.4 7.6" fill="none" stroke="#a6a6a6" stroke-width="1.3"/></svg>
<svg class="a" style="left:48px;top:145px" width="8" height="6" viewBox="0 0 8 6"><path d="M1.6 1.8 L4 4.2 L6.4 1.8" fill="none" stroke="#a6a6a6" stroke-width="1.25"/></svg>
<svg class="a" style="left:63.6px;top:142.5px" width="13" height="11.5" viewBox="0 0 13 11.5"><path d="M12 4.2 H5.6 Q1.2 4.2 1.2 7.6 Q1.2 10.6 5 10.8" fill="none" stroke="#a6a6a6" stroke-width="1.3"/><path d="M8.6 0.8 L12 4.2 L8.6 7.6" fill="none" stroke="#a6a6a6" stroke-width="1.3"/></svg>
<svg class="a" style="left:80.6px;top:145px" width="8" height="6" viewBox="0 0 8 6"><path d="M1.6 1.8 L4 4.2 L6.4 1.8" fill="none" stroke="#a6a6a6" stroke-width="1.25"/></svg>
<svg class="a" style="left:97.6px;top:141.6px" width="13" height="13" viewBox="0 0 13 13"><path d="M0.6 0.6 H7 L10 3.6 V12.2 H0.6Z" fill="#fff" stroke="#666" stroke-width="0.9"/><circle cx="7" cy="7.6" r="2.8" fill="#fff" stroke="#555" stroke-width="1"/><path d="M9 9.8 L12 12.6" stroke="#555" stroke-width="1.3"/></svg>
<svg class="a" style="left:120.8px;top:141.6px" width="14" height="13" viewBox="0 0 14 13"><path d="M0.6 0.6 H6.4 L9 3.2 V12.2 H0.6Z" fill="#fff" stroke="#777" stroke-width="0.9"/><path d="M1.2 1 V11.8" stroke="#3b78c4" stroke-width="1"/><rect x="4.6" y="6.6" width="9" height="4.6" rx="0.6" fill="#666"/><rect x="6.4" y="3.6" width="5.4" height="3.2" fill="#fff" stroke="#666" stroke-width="0.8"/><rect x="6.4" y="9.6" width="5.4" height="3" fill="#fff" stroke="#666" stroke-width="0.7"/></svg>
<svg class="a" style="left:149px;top:145px" width="6" height="6" viewBox="0 0 6 6"><path d="M0.6 0.8 H5.4" stroke="#444" stroke-width="1"/><path d="M0.4 2.6 H5.6 L3 5.4Z" fill="#444"/></svg>
<div class="a" style="left:4.5px;top:170.4px;width:85.6px;height:21.3px;background:#fff;border:1px solid #d0d0d0;box-sizing:border-box;"></div>
<span class="t u" style="left:8.4px;top:173px;font-size:11.2px;">H2</span>
<svg class="a" style="left:79.7px;top:179.29999999999998px" width="4.6" height="2.6" viewBox="0 0 4.6 2.6"><path d="M0 0 H4.6 L2.3 2.6 Z" fill="#666"/></svg>
<svg class="a" style="left:101.5px;top:176px" width="3" height="10" viewBox="0 0 3 10"><circle cx="1.5" cy="1.4" r="0.7" fill="#9a9a9a"/><circle cx="1.5" cy="4.8" r="0.7" fill="#9a9a9a"/><circle cx="1.5" cy="8.2" r="0.7" fill="#9a9a9a"/></svg>
<div class="a" style="left:116.2px;top:170.4px;width:93px;height:21.3px;background:#fff;border:1px solid #d0d0d0;box-sizing:border-box;"></div>
<svg class="a" style="left:127px;top:176.3px" width="9.4" height="9.4" viewBox="0 0 9.4 9.4"><path d="M0.8 0.8 L8.6 8.6 M8.6 0.8 L0.8 8.6" stroke="#b4b4b4" stroke-width="1" fill="none"/></svg>
<svg class="a" style="left:157px;top:176.6px" width="11" height="8.6" viewBox="0 0 11 8.6"><path d="M0.8 4.8 L3.8 7.8 L10.2 0.8" stroke="#b4b4b4" stroke-width="1.1" fill="none"/></svg>
<span class="t u" style="left:43.19999999999999px;width:300px;text-align:center;top:172.6px;font-family:'Liberation Serif',serif;font-size:12.6px;color:#333;"><i>f</i><span style="font-size:8.6px;font-style:italic;">x</span></span>
<div class="a" style="left:212px;top:170.4px;width:868px;height:56px;background:#fff;border:1px solid #d0d0d0;border-right:0;box-sizing:border-box;"></div>
<span class="t u" style="left:221.3px;top:173px;font-size:11.2px;color:#333;">0.708046773913044</span>
<svg class="a" style="left:1075.4px;top:174.6px" width="9" height="7" viewBox="0 0 9 7"><path d="M1 5.5 L4.5 2 L8 5.5" fill="none" stroke="#444" stroke-width="1.1"/></svg>
<div class="a" style="left:0px;top:235.6px;width:1074.6px;height:306.4px;background:#fff;"></div>
<div class="a" style="left:0px;top:235.6px;width:1074.6px;height:15.099999999999994px;background:#e6e6e6;"></div>
<div class="a" style="left:0px;top:235.6px;width:22.5px;height:306.4px;background:#e6e6e6;"></div>
<div class="a" style="left:863.3px;top:234.79999999999998px;width:154.60000000000002px;height:15.899999999999995px;background:#d2d2d2;"></div>
<div class="a" style="left:0px;top:266.64px;width:22.5px;height:15.94px;background:#d2d2d2;"></div>
<svg class="a" style="left:0px;top:0px" width="1080" height="566" viewBox="0 0 1080 566"><path d="M89.2 250.7 V542.0" stroke="#d4d4d4" stroke-width="1"/><path d="M155.6 250.7 V542.0" stroke="#d4d4d4" stroke-width="1"/><path d="M247.6 250.7 V542.0" stroke="#d4d4d4" stroke-width="1"/><path d="M376.6 250.7 V542.0" stroke="#d4d4d4" stroke-width="1"/><path d="M549.7 250.7 V542.0" stroke="#d4d4d4" stroke-width="1"/><path d="M703.2 250.7 V542.0" stroke="#d4d4d4" stroke-width="1"/><path d="M863.3 250.7 V542.0" stroke="#d4d4d4" stroke-width="1"/><path d="M1017.9 250.7 V542.0" stroke="#d4d4d4" stroke-width="1"/><path d="M1074.6 250.7 V542.0" stroke="#d4d4d4" stroke-width="1"/><path d="M22.5 282.58 H1074.6" stroke="#d4d4d4" stroke-width="1"/><path d="M22.5 298.52 H1074.6" stroke="#d4d4d4" stroke-width="1"/><path d="M22.5 314.46 H1074.6" stroke="#d4d4d4" stroke-width="1"/><path d="M22.5 330.40 H1074.6" stroke="#d4d4d4" stroke-width="1"/><path d="M22.5 346.34 H1074.6" stroke="#d4d4d4" stroke-width="1"/><path d="M22.5 362.28 H1074.6" stroke="#d4d4d4" stroke-width="1"/><path d="M22.5 378.22 H1074.6" stroke="#d4d4d4" stroke-width="1"/><path d="M22.5 394.16 H1074.6" stroke="#d4d4d4" stroke-width="1"/><path d="M22.5 410.10 H1074.6" stroke="#d4d4d4" stroke-width="1"/><path d="M22.5 426.04 H1074.6" stroke="#d4d4d4" stroke-width="1"/><path d="M22.5 441.98 H1074.6" stroke="#d4d4d4" stroke-width="1"/><path d="M22.5 457.92 H1074.6" stroke="#d4d4d4" stroke-width="1"/><path d="M22.5 473.86 H1074.6" stroke="#d4d4d4" stroke-width="1"/><path d="M22.5 489.80 H1074.6" stroke="#d4d4d4" stroke-width="1"/><path d="M22.5 505.74 H1074.6" stroke="#d4d4d4" stroke-width="1"/><path d="M22.5 521.68 H1074.6" stroke="#d4d4d4" stroke-width="1"/><path d="M22.5 537.62 H1074.6" stroke="#d4d4d4" stroke-width="1"/><path d="M22.5 236.6 V250.7" stroke="#c0c0c0" stroke-width="1"/><path d="M89.2 236.6 V250.7" stroke="#c0c0c0" stroke-width="1"/><path d="M155.6 236.6 V250.7" stroke="#c0c0c0" stroke-width="1"/><path d="M247.6 236.6 V250.7" stroke="#c0c0c0" stroke-width="1"/><path d="M376.6 236.6 V250.7" stroke="#c0c0c0" stroke-width="1"/><path d="M549.7 236.6 V250.7" stroke="#c0c0c0" stroke-width="1"/><path d="M703.2 236.6 V250.7" stroke="#c0c0c0" stroke-width="1"/><path d="M863.3 236.6 V250.7" stroke="#c0c0c0" stroke-width="1"/><path d="M1017.9 236.6 V250.7" stroke="#c0c0c0" stroke-width="1"/><path d="M0 266.64 H22.5" stroke="#c8c8c8" stroke-width="1"/><path d="M0 282.58 H22.5" stroke="#c8c8c8" stroke-width="1"/><path d="M0 298.52 H22.5" stroke="#c8c8c8" stroke-width="1"/><path d="M0 314.46 H22.5" stroke="#c8c8c8" stroke-width="1"/><path d="M0 330.40 H22.5" stroke="#c8c8c8" stroke-width="1"/><path d="M0 346.34 H22.5" stroke="#c8c8c8" stroke-width="1"/><path d="M0 362.28 H22.5" stroke="#c8c8c8" stroke-width="1"/><path d="M0 378.22 H22.5" stroke="#c8c8c8" stroke-width="1"/><path d="M0 394.16 H22.5" stroke="#c8c8c8" stroke-width="1"/><path d="M0 410.10 H22.5" stroke="#c8c8c8" stroke-width="1"/><path d="M0 426.04 H22.5" stroke="#c8c8c8" stroke-width="1"/><path d="M0 441.98 H22.5" stroke="#c8c8c8" stroke-width="1"/><path d="M0 457.92 H22.5" stroke="#c8c8c8" stroke-width="1"/><path d="M0 473.86 H22.5" stroke="#c8c8c8" stroke-width="1"/><path d="M0 489.80 H22.5" stroke="#c8c8c8" stroke-width="1"/><path d="M0 505.74 H22.5" stroke="#c8c8c8" stroke-width="1"/><path d="M0 521.68 H22.5" stroke="#c8c8c8" stroke-width="1"/><path d="M0 537.62 H22.5" stroke="#c8c8c8" stroke-width="1"/><path d="M0 250.7 H1074.6" stroke="#b4b4b4" stroke-width="1"/><path d="M22.5 236.6 V542.0" stroke="#b4b4b4" stroke-width="1"/><path d="M1074.6 235.6 V542.0" stroke="#c0c0c0" stroke-width="1"/><path d="M21.6 242.8 V248.8 H15.6Z" fill="#b4b4b4"/><path d="M22.5 266.64 H1074.6" stroke="#4a4a4a" stroke-width="1"/><path d="M89.2 251.2 V266.64" stroke="#4a4a4a" stroke-width="1"/><path d="M155.6 251.2 V266.64" stroke="#4a4a4a" stroke-width="1"/><path d="M247.6 251.2 V266.64" stroke="#4a4a4a" stroke-width="1"/><path d="M376.6 251.2 V266.64" stroke="#4a4a4a" stroke-width="1"/><path d="M549.7 251.2 V266.64" stroke="#4a4a4a" stroke-width="1"/><path d="M703.2 251.2 V266.64" stroke="#4a4a4a" stroke-width="1"/><path d="M863.3 251.2 V266.64" stroke="#4a4a4a" stroke-width="1"/><path d="M1017.9 251.2 V266.64" stroke="#4a4a4a" stroke-width="1"/></svg>
<span class="t sh" style="left:-94.15px;width:300px;text-align:center;top:236.7px;font-size:13.6px;transform:scaleX(0.72);">A</span>
<span class="t sh" style="left:-27.599999999999994px;width:300px;text-align:center;top:236.7px;font-size:13.6px;transform:scaleX(0.72);">B</span>
<span class="t sh" style="left:51.599999999999994px;width:300px;text-align:center;top:236.7px;font-size:13.6px;transform:scaleX(0.72);">C</span>
<span class="t sh" style="left:162.10000000000002px;width:300px;text-align:center;top:236.7px;font-size:13.6px;transform:scaleX(0.72);">D</span>
<span class="t sh" style="left:313.15000000000003px;width:300px;text-align:center;top:236.7px;font-size:13.6px;transform:scaleX(0.72);">E</span>
<span class="t sh" style="left:476.45000000000005px;width:300px;text-align:center;top:236.7px;font-size:13.6px;transform:scaleX(0.72);">F</span>
<span class="t sh" style="left:633.25px;width:300px;text-align:center;top:236.7px;font-size:13.6px;transform:scaleX(0.72);">G</span>
<span class="t sh" style="left:790.5999999999999px;width:300px;text-align:center;top:236.7px;color:#217346;font-size:13.6px;transform:scaleX(0.72);">H</span>
<span class="t sh" style="left:-138.6px;width:300px;text-align:center;top:251.59999999999997px;font-size:13.2px;letter-spacing:-0.4px;color:#333;">1</span>
<span class="t sh" style="left:-138.6px;width:300px;text-align:center;top:267.53999999999996px;font-size:13.2px;letter-spacing:-0.4px;color:#333;color:#217346;">2</span>
<span class="t sh" style="left:-138.6px;width:300px;text-align:center;top:283.47999999999996px;font-size:13.2px;letter-spacing:-0.4px;color:#333;">3</span>
<span class="t sh" style="left:-138.6px;width:300px;text-align:center;top:299.41999999999996px;font-size:13.2px;letter-spacing:-0.4px;color:#333;">4</span>
<span class="t sh" style="left:-138.6px;width:300px;text-align:center;top:315.35999999999996px;font-size:13.2px;letter-spacing:-0.4px;color:#333;">5</span>
<span class="t sh" style="left:-138.6px;width:300px;text-align:center;top:331.29999999999995px;font-size:13.2px;letter-spacing:-0.4px;color:#333;">6</span>
<span class="t sh" style="left:-138.6px;width:300px;text-align:center;top:347.23999999999995px;font-size:13.2px;letter-spacing:-0.4px;color:#333;">7</span>
<span class="t sh" style="left:-138.6px;width:300px;text-align:center;top:363.17999999999995px;font-size:13.2px;letter-spacing:-0.4px;color:#333;">8</span>
<span class="t sh" style="left:-138.6px;width:300px;text-align:center;top:379.11999999999995px;font-size:13.2px;letter-spacing:-0.4px;color:#333;">9</span>
<span class="t sh" style="left:-138.6px;width:300px;text-align:center;top:395.05999999999995px;font-size:13.2px;letter-spacing:-0.4px;color:#333;">10</span>
<span class="t sh" style="left:-138.6px;width:300px;text-align:center;top:411.0px;font-size:13.2px;letter-spacing:-0.4px;color:#333;">11</span>
<span class="t sh" style="left:-138.6px;width:300px;text-align:center;top:426.93999999999994px;font-size:13.2px;letter-spacing:-0.4px;color:#333;">12</span>
<span class="t sh" style="left:-138.6px;width:300px;text-align:center;top:442.88px;font-size:13.2px;letter-spacing:-0.4px;color:#333;">13</span>
<span class="t sh" style="left:-138.6px;width:300px;text-align:center;top:458.81999999999994px;font-size:13.2px;letter-spacing:-0.4px;color:#333;">14</span>
<span class="t sh" style="left:-138.6px;width:300px;text-align:center;top:474.76px;font-size:13.2px;letter-spacing:-0.4px;color:#333;">15</span>
<span class="t sh" style="left:-138.6px;width:300px;text-align:center;top:490.69999999999993px;font-size:13.2px;letter-spacing:-0.4px;color:#333;">16</span>
<span class="t sh" style="left:-138.6px;width:300px;text-align:center;top:506.64px;font-size:13.2px;letter-spacing:-0.4px;color:#333;">17</span>
<span class="t sh" style="left:-138.6px;width:300px;text-align:center;top:522.58px;font-size:13.2px;letter-spacing:-0.4px;color:#333;">18</span>
<div class="cell" style="left:23.2px;top:252.00px;width:65.5px;height:14.4px;"><span class="b" style="position:absolute;left:-267.2px;width:600px;text-align:center;">年份</span></div>
<div class="cell" style="left:89.9px;top:252.00px;width:65.2px;height:14.4px;"><span class="b" style="position:absolute;left:-267.4px;width:600px;text-align:center;">地区</span></div>
<div class="cell" style="left:156.29999999999998px;top:252.00px;width:90.8px;height:14.4px;"><span class="b" style="position:absolute;left:-254.6px;width:600px;text-align:center;">行政区划代码</span></div>
<div class="cell" style="left:248.29999999999998px;top:252.00px;width:127.8px;height:14.4px;"><span class="b" style="position:absolute;left:-236.1px;width:600px;text-align:center;">迁入来源地<span class="l0">or</span>迁出目的地</span></div>
<div class="cell" style="left:377.3px;top:252.00px;width:171.9px;height:14.4px;"><span class="b" style="position:absolute;left:-0.8px;">来源地<span class="l0">or</span>迁出目的地<span class="l">-</span>行政区划代码</span></div>
<div class="cell" style="left:550.4000000000001px;top:252.00px;width:152.3px;height:14.4px;"><span class="b" style="position:absolute;left:1.1px;">人口占全国迁入的比例<span class="l">-</span>年</span></div>
<div class="cell" style="left:703.9000000000001px;top:252.00px;width:158.9px;height:14.4px;"><span class="b" style="position:absolute;left:-1.1px;">人口占全国迁入的比例<span class="l">-</span>年中位数</span></div>
<div class="cell" style="left:864.0px;top:252.00px;width:153.4px;height:14.4px;"><span class="b" style="position:absolute;left:1.8px;">人口占全国迁出的比例<span class="l">-</span>年</span></div>
<div class="cell" style="left:1018.0px;top:252.00px;width:56.1px;height:14.4px;"><span class="b" style="position:absolute;left:-1.6px;">人口占全国迁出的比例<span class="l">-</span>年中位数</span></div>
<div class="cell n" style="left:24.1px;top:267.94px;width:62.5px;height:14.64px;">2020</div>
<div class="cell " style="left:91.5px;top:268.54px;width:62.1px;height:14.04px;">北京市</div>
<div class="cell n" style="left:157.2px;top:267.94px;width:87.8px;height:14.64px;">110000</div>
<div class="cell " style="left:249.9px;top:268.54px;width:124.7px;height:14.04px;">河北省</div>
<div class="cell n" style="left:378.20000000000005px;top:267.94px;width:168.9px;height:14.64px;">130000</div>
<div class="cell n" style="left:551.3000000000001px;top:267.94px;width:149.3px;height:14.64px;">0<span class="p">.</span>874841991</div>
<div class="cell n" style="left:704.8000000000001px;top:267.94px;width:155.9px;height:14.64px;">0<span class="p">.</span>848928</div>
<div class="cell n" style="left:864.9px;top:267.94px;width:150.4px;height:14.64px;">0<span class="p">.</span>708046774</div>
<div class="cell n" style="left:24.1px;top:283.88px;width:62.5px;height:14.64px;">2020</div>
<div class="cell " style="left:91.5px;top:284.48px;width:62.1px;height:14.04px;">北京市</div>
<div class="cell n" style="left:157.2px;top:283.88px;width:87.8px;height:14.64px;">110000</div>
<div class="cell " style="left:249.9px;top:284.48px;width:124.7px;height:14.04px;">山东省</div>
<div class="cell n" style="left:378.20000000000005px;top:283.88px;width:168.9px;height:14.64px;">370000</div>
<div class="cell n" style="left:551.3000000000001px;top:283.88px;width:149.3px;height:14.64px;">0<span class="p">.</span>136324183</div>
<div class="cell n" style="left:704.8000000000001px;top:283.88px;width:155.9px;height:14.64px;">0<span class="p">.</span>101517</div>
<div class="cell n" style="left:864.9px;top:283.88px;width:150.4px;height:14.64px;">0<span class="p">.</span>099658748</div>
<div class="cell n" style="left:24.1px;top:299.82px;width:62.5px;height:14.64px;">2020</div>
<div class="cell " style="left:91.5px;top:300.42px;width:62.1px;height:14.04px;">北京市</div>
<div class="cell n" style="left:157.2px;top:299.82px;width:87.8px;height:14.64px;">110000</div>
<div class="cell " style="left:249.9px;top:300.42px;width:124.7px;height:14.04px;">河南省</div>
<div class="cell n" style="left:378.20000000000005px;top:299.82px;width:168.9px;height:14.64px;">410000</div>
<div class="cell n" style="left:551.3000000000001px;top:299.82px;width:149.3px;height:14.64px;">0<span class="p">.</span>12379267</div>
<div class="cell n" style="left:704.8000000000001px;top:299.82px;width:155.9px;height:14.64px;">0<span class="p">.</span>098488</div>
<div class="cell n" style="left:864.9px;top:299.82px;width:150.4px;height:14.64px;">0<span class="p">.</span>095375557</div>
<div class="cell n" style="left:24.1px;top:315.76px;width:62.5px;height:14.64px;">2020</div>
<div class="cell " style="left:91.5px;top:316.36px;width:62.1px;height:14.04px;">北京市</div>
<div class="cell n" style="left:157.2px;top:315.76px;width:87.8px;height:14.64px;">110000</div>
<div class="cell " style="left:249.9px;top:316.36px;width:124.7px;height:14.04px;">天津市</div>
<div class="cell n" style="left:378.20000000000005px;top:315.76px;width:168.9px;height:14.64px;">120000</div>
<div class="cell n" style="left:551.3000000000001px;top:315.76px;width:149.3px;height:14.64px;">0<span class="p">.</span>1161026</div>
<div class="cell n" style="left:704.8000000000001px;top:315.76px;width:155.9px;height:14.64px;">0<span class="p">.</span>094688</div>
<div class="cell n" style="left:864.9px;top:315.76px;width:150.4px;height:14.64px;">0<span class="p">.</span>109560487</div>
<div class="cell n" style="left:24.1px;top:331.70px;width:62.5px;height:14.64px;">2020</div>
<div class="cell " style="left:91.5px;top:332.30px;width:62.1px;height:14.04px;">北京市</div>
<div class="cell n" style="left:157.2px;top:331.70px;width:87.8px;height:14.64px;">110000</div>
<div class="cell " style="left:249.9px;top:332.30px;width:124.7px;height:14.04px;">山西省</div>
<div class="cell n" style="left:378.20000000000005px;top:331.70px;width:168.9px;height:14.64px;">140000</div>
<div class="cell n" style="left:551.3000000000001px;top:331.70px;width:149.3px;height:14.64px;">0<span class="p">.</span>087615417</div>
<div class="cell n" style="left:704.8000000000001px;top:331.70px;width:155.9px;height:14.64px;">0<span class="p">.</span>067648</div>
<div class="cell n" style="left:864.9px;top:331.70px;width:150.4px;height:14.64px;">0<span class="p">.</span>065353096</div>
<div class="cell n" style="left:24.1px;top:347.64px;width:62.5px;height:14.64px;">2020</div>
<div class="cell " style="left:91.5px;top:348.24px;width:62.1px;height:14.04px;">北京市</div>
<div class="cell n" style="left:157.2px;top:347.64px;width:87.8px;height:14.64px;">110000</div>
<div class="cell " style="left:249.9px;top:348.24px;width:124.7px;height:14.04px;">辽宁省</div>
<div class="cell n" style="left:378.20000000000005px;top:347.64px;width:168.9px;height:14.64px;">210000</div>
<div class="cell n" style="left:551.3000000000001px;top:347.64px;width:149.3px;height:14.64px;">0<span class="p">.</span>070070826</div>
<div class="cell n" style="left:704.8000000000001px;top:347.64px;width:155.9px;height:14.64px;">0<span class="p">.</span>055963</div>
<div class="cell n" style="left:864.9px;top:347.64px;width:150.4px;height:14.64px;">0<span class="p">.</span>050573913</div>
<div class="cell n" style="left:24.1px;top:363.58px;width:62.5px;height:14.64px;">2020</div>
<div class="cell " style="left:91.5px;top:364.18px;width:62.1px;height:14.04px;">北京市</div>
<div class="cell n" style="left:157.2px;top:363.58px;width:87.8px;height:14.64px;">110000</div>
<div class="cell " style="left:249.9px;top:364.18px;width:124.7px;height:14.04px;">内蒙古自治区</div>
<div class="cell n" style="left:378.20000000000005px;top:363.58px;width:168.9px;height:14.64px;">150000</div>
<div class="cell n" style="left:551.3000000000001px;top:363.58px;width:149.3px;height:14.64px;">0<span class="p">.</span>061444183</div>
<div class="cell n" style="left:704.8000000000001px;top:363.58px;width:155.9px;height:14.64px;">0<span class="p">.</span>048944</div>
<div class="cell n" style="left:864.9px;top:363.58px;width:150.4px;height:14.64px;">0<span class="p">.</span>042984183</div>
<div class="cell n" style="left:24.1px;top:379.52px;width:62.5px;height:14.64px;">2020</div>
<div class="cell " style="left:91.5px;top:380.12px;width:62.1px;height:14.04px;">北京市</div>
<div class="cell n" style="left:157.2px;top:379.52px;width:87.8px;height:14.64px;">110000</div>
<div class="cell " style="left:249.9px;top:380.12px;width:124.7px;height:14.04px;">黑龙江省</div>
<div class="cell n" style="left:378.20000000000005px;top:379.52px;width:168.9px;height:14.64px;">230000</div>
<div class="cell n" style="left:551.3000000000001px;top:379.52px;width:149.3px;height:14.64px;">0<span class="p">.</span>045748496</div>
<div class="cell n" style="left:704.8000000000001px;top:379.52px;width:155.9px;height:14.64px;">0<span class="p">.</span>032705</div>
<div class="cell n" style="left:864.9px;top:379.52px;width:150.4px;height:14.64px;">0<span class="p">.</span>031813374</div>
<div class="cell n" style="left:24.1px;top:395.46px;width:62.5px;height:14.64px;">2020</div>
<div class="cell " style="left:91.5px;top:396.06px;width:62.1px;height:14.04px;">北京市</div>
<div class="cell n" style="left:157.2px;top:395.46px;width:87.8px;height:14.64px;">110000</div>
<div class="cell " style="left:249.9px;top:396.06px;width:124.7px;height:14.04px;">安徽省</div>
<div class="cell n" style="left:378.20000000000005px;top:395.46px;width:168.9px;height:14.64px;">340000</div>
<div class="cell n" style="left:551.3000000000001px;top:395.46px;width:149.3px;height:14.64px;">0<span class="p">.</span>045505609</div>
<div class="cell n" style="left:704.8000000000001px;top:395.46px;width:155.9px;height:14.64px;">0<span class="p">.</span>033428</div>
<div class="cell n" style="left:864.9px;top:395.46px;width:150.4px;height:14.64px;">0<span class="p">.</span>033919922</div>
<div class="cell n" style="left:24.1px;top:411.40px;width:62.5px;height:14.64px;">2020</div>
<div class="cell " style="left:91.5px;top:412.00px;width:62.1px;height:14.04px;">北京市</div>
<div class="cell n" style="left:157.2px;top:411.40px;width:87.8px;height:14.64px;">110000</div>
<div class="cell " style="left:249.9px;top:412.00px;width:124.7px;height:14.04px;">江苏省</div>
<div class="cell n" style="left:378.20000000000005px;top:411.40px;width:168.9px;height:14.64px;">320000</div>
<div class="cell n" style="left:551.3000000000001px;top:411.40px;width:149.3px;height:14.64px;">0<span class="p">.</span>045366165</div>
<div class="cell n" style="left:704.8000000000001px;top:411.40px;width:155.9px;height:14.64px;">0<span class="p">.</span>036516</div>
<div class="cell n" style="left:864.9px;top:411.40px;width:150.4px;height:14.64px;">0<span class="p">.</span>039212348</div>
<div class="cell n" style="left:24.1px;top:427.34px;width:62.5px;height:14.64px;">2020</div>
<div class="cell " style="left:91.5px;top:427.94px;width:62.1px;height:14.04px;">北京市</div>
<div class="cell n" style="left:157.2px;top:427.34px;width:87.8px;height:14.64px;">110000</div>
<div class="cell " style="left:249.9px;top:427.94px;width:124.7px;height:14.04px;">陕西省</div>
<div class="cell n" style="left:378.20000000000005px;top:427.34px;width:168.9px;height:14.64px;">610000</div>
<div class="cell n" style="left:551.3000000000001px;top:427.34px;width:149.3px;height:14.64px;">0<span class="p">.</span>03627513</div>
<div class="cell n" style="left:704.8000000000001px;top:427.34px;width:155.9px;height:14.64px;">0<span class="p">.</span>030738</div>
<div class="cell n" style="left:864.9px;top:427.34px;width:150.4px;height:14.64px;">0<span class="p">.</span>029265017</div>
<div class="cell n" style="left:24.1px;top:443.28px;width:62.5px;height:14.64px;">2020</div>
<div class="cell " style="left:91.5px;top:443.88px;width:62.1px;height:14.04px;">北京市</div>
<div class="cell n" style="left:157.2px;top:443.28px;width:87.8px;height:14.64px;">110000</div>
<div class="cell " style="left:249.9px;top:443.88px;width:124.7px;height:14.04px;">广东省</div>
<div class="cell n" style="left:378.20000000000005px;top:443.28px;width:168.9px;height:14.64px;">440000</div>
<div class="cell n" style="left:551.3000000000001px;top:443.28px;width:149.3px;height:14.64px;">0<span class="p">.</span>033909296</div>
<div class="cell n" style="left:704.8000000000001px;top:443.28px;width:155.9px;height:14.64px;">0<span class="p">.</span>031504</div>
<div class="cell n" style="left:864.9px;top:443.28px;width:150.4px;height:14.64px;">0<span class="p">.</span>033979548</div>
<div class="cell n" style="left:24.1px;top:459.22px;width:62.5px;height:14.64px;">2020</div>
<div class="cell " style="left:91.5px;top:459.82px;width:62.1px;height:14.04px;">北京市</div>
<div class="cell n" style="left:157.2px;top:459.22px;width:87.8px;height:14.64px;">110000</div>
<div class="cell " style="left:249.9px;top:459.82px;width:124.7px;height:14.04px;">四川省</div>
<div class="cell n" style="left:378.20000000000005px;top:459.22px;width:168.9px;height:14.64px;">510000</div>
<div class="cell n" style="left:551.3000000000001px;top:459.22px;width:149.3px;height:14.64px;">0<span class="p">.</span>033744087</div>
<div class="cell n" style="left:704.8000000000001px;top:459.22px;width:155.9px;height:14.64px;">0<span class="p">.</span>026989</div>
<div class="cell n" style="left:864.9px;top:459.22px;width:150.4px;height:14.64px;">0<span class="p">.</span>0285716</div>
<div class="cell n" style="left:24.1px;top:475.16px;width:62.5px;height:14.64px;">2020</div>
<div class="cell " style="left:91.5px;top:475.76px;width:62.1px;height:14.04px;">北京市</div>
<div class="cell n" style="left:157.2px;top:475.16px;width:87.8px;height:14.64px;">110000</div>
<div class="cell " style="left:249.9px;top:475.76px;width:124.7px;height:14.04px;">吉林省</div>
<div class="cell n" style="left:378.20000000000005px;top:475.16px;width:168.9px;height:14.64px;">220000</div>
<div class="cell n" style="left:551.3000000000001px;top:475.16px;width:149.3px;height:14.64px;">0<span class="p">.</span>033167791</div>
<div class="cell n" style="left:704.8000000000001px;top:475.16px;width:155.9px;height:14.64px;">0<span class="p">.</span>025109</div>
<div class="cell n" style="left:864.9px;top:475.16px;width:150.4px;height:14.64px;">0<span class="p">.</span>02246633</div>
<div class="cell n" style="left:24.1px;top:491.10px;width:62.5px;height:14.64px;">2020</div>
<div class="cell " style="left:91.5px;top:491.70px;width:62.1px;height:14.04px;">北京市</div>
<div class="cell n" style="left:157.2px;top:491.10px;width:87.8px;height:14.64px;">110000</div>
<div class="cell " style="left:249.9px;top:491.70px;width:124.7px;height:14.04px;">湖南省</div>
<div class="cell n" style="left:378.20000000000005px;top:491.10px;width:168.9px;height:14.64px;">430000</div>
<div class="cell n" style="left:551.3000000000001px;top:491.10px;width:149.3px;height:14.64px;">0<span class="p">.</span>02901653</div>
<div class="cell n" style="left:704.8000000000001px;top:491.10px;width:155.9px;height:14.64px;">0<span class="p">.</span>022302</div>
<div class="cell n" style="left:864.9px;top:491.10px;width:150.4px;height:14.64px;">0<span class="p">.</span>022416539</div>
<div class="cell n" style="left:24.1px;top:507.04px;width:62.5px;height:14.64px;">2020</div>
<div class="cell " style="left:91.5px;top:507.64px;width:62.1px;height:14.04px;">北京市</div>
<div class="cell n" style="left:157.2px;top:507.04px;width:87.8px;height:14.64px;">110000</div>
<div class="cell " style="left:249.9px;top:507.64px;width:124.7px;height:14.04px;">上海市</div>
<div class="cell n" style="left:378.20000000000005px;top:507.04px;width:168.9px;height:14.64px;">310000</div>
<div class="cell n" style="left:551.3000000000001px;top:507.04px;width:149.3px;height:14.64px;">0<span class="p">.</span>024972852</div>
<div class="cell n" style="left:704.8000000000001px;top:507.04px;width:155.9px;height:14.64px;">0<span class="p">.</span>010277</div>
<div class="cell n" style="left:864.9px;top:507.04px;width:150.4px;height:14.64px;">0<span class="p">.</span>025600417</div>
<div class="cell n" style="left:24.1px;top:522.98px;width:62.5px;height:14.64px;">2020</div>
<div class="cell " style="left:91.5px;top:523.58px;width:62.1px;height:14.04px;">北京市</div>
<div class="cell n" style="left:157.2px;top:522.98px;width:87.8px;height:14.64px;">110000</div>
<div class="cell " style="left:249.9px;top:523.58px;width:124.7px;height:14.04px;">浙江省</div>
<div class="cell n" style="left:378.20000000000005px;top:522.98px;width:168.9px;height:14.64px;">330000</div>
<div class="cell n" style="left:551.3000000000001px;top:522.98px;width:149.3px;height:14.64px;">0<span class="p">.</span>023035461</div>
<div class="cell n" style="left:704.8000000000001px;top:522.98px;width:155.9px;height:14.64px;">0<span class="p">.</span>015436</div>
<div class="cell n" style="left:864.9px;top:522.98px;width:150.4px;height:14.64px;">0<span class="p">.</span>0223158</div>
<div class="cell" style="left:23.5px;top:538.52px;width:1050px;height:3.48px;"><span class="a n" style="left:0;width:64.1px;">2020</span><span class="a" style="left:67.9px;">北京市</span><span class="a n" style="left:132.6px;width:90px;">110000</span><span class="a" style="left:226.3px;">福建省</span></div>
<div class="a" style="left:863.3px;top:250.1px;width:154.60000000000002px;height:1.2px;background:#217346;"></div>
<div class="a" style="left:21.6px;top:266.64px;width:1.3px;height:15.94px;background:#2f7d52;"></div>
<svg class="a" style="left:0px;top:0px" width="1080" height="566" viewBox="0 0 1080 566"><rect x="862.60" y="265.94" width="156.20" height="1.30" fill="#217346"/><rect x="862.60" y="265.94" width="1.40" height="17.54" fill="#2b7a50"/><rect x="1017.00" y="267.24" width="1.80" height="13.04" fill="#62a07e"/><rect x="864.00" y="281.78" width="151.30" height="1.70" fill="#62a07e"/><rect x="1015.80" y="280.98" width="3.40" height="3.20" fill="#217346"/></svg>
<div class="a" style="left:1074.6px;top:235.6px;width:5.4px;height:306.4px;background:#e6e6e6;"></div>
<div class="a" style="left:1076px;top:235.6px;width:5px;height:14px;background:#fff;border:1px solid #c6c6c6;border-right:0;box-sizing:border-box;"></div>
<div class="a" style="left:1076px;top:250px;width:5px;height:14.2px;background:#fff;border:1px solid #c6c6c6;border-right:0;box-sizing:border-box;"></div>
<div class="a" style="left:1076.2px;top:264.4px;width:4px;height:265px;background:#f0f0f0;border-left:1px solid #d6d6d6;box-sizing:border-box;"></div>
<div class="a" style="left:1076.4px;top:529.3px;width:4px;height:13px;background:#fff;border:1px solid #c6c6c6;border-right:0;box-sizing:border-box;"></div>
<div class="a" style="left:0px;top:542.0px;width:1080px;height:19.4px;background:#e6e6e6;border-top:1px solid #c6c6c6;box-sizing:border-box;"></div>
<svg class="a" style="left:15px;top:547.5px" width="5" height="7" viewBox="0 0 5 7"><path d="M4.4 0.4 V6.6 L0.6 3.5Z" fill="#c2c2c2"/></svg>
<svg class="a" style="left:35px;top:547.5px" width="5" height="7" viewBox="0 0 5 7"><path d="M0.6 0.4 V6.6 L4.4 3.5Z" fill="#c2c2c2"/></svg>
<div class="a" style="left:65.5px;top:542.0px;width:59.5px;height:17px;background:#fff;border-bottom:1.6px solid #217346;box-sizing:border-box;"></div>
<span class="t g" style="left:-54.7px;width:300px;text-align:center;top:541.7px;font-size:11.6px;">年度数据</span>
<span class="t u" style="left:4.5px;width:300px;text-align:center;top:541.7px;font-size:11.6px;color:#333;">月度数据</span>
<div class="a" style="left:183.6px;top:545px;width:1px;height:13px;background:#ababab;"></div>
<svg class="a" style="left:204.2px;top:544.4px" width="14" height="14" viewBox="0 0 14 14"><circle cx="7" cy="7" r="6" fill="none" stroke="#777" stroke-width="0.9"/><path d="M3.8 7 H10.2 M7 3.8 V10.2" stroke="#666" stroke-width="0.9"/></svg>
<svg class="a" style="left:654px;top:546.6px" width="3" height="9" viewBox="0 0 3 9"><circle cx="1.5" cy="1.2" r="0.7" fill="#9a9a9a"/><circle cx="1.5" cy="4.4" r="0.7" fill="#9a9a9a"/><circle cx="1.5" cy="7.6" r="0.7" fill="#9a9a9a"/></svg>
<div class="a" style="left:663.4px;top:544.4px;width:15px;height:14.2px;background:#fff;border:1px solid #ababab;box-sizing:border-box;"></div>
<svg class="a" style="left:668.4px;top:548.4px" width="5" height="6.4" viewBox="0 0 5 6.4"><path d="M4.4 0.2 V6.2 L0.6 3.2Z" fill="#222"/></svg>
<div class="a" style="left:677.4px;top:544.4px;width:269px;height:14.2px;background:#fff;border:1px solid #ababab;box-sizing:border-box;"></div>
<div class="a" style="left:1061.5px;top:544.4px;width:13.6px;height:14.2px;background:#fff;border:1px solid #ababab;box-sizing:border-box;"></div>
<svg class="a" style="left:1066px;top:548.4px" width="5" height="6.4" viewBox="0 0 5 6.4"><path d="M0.6 0.2 V6.2 L4.4 3.2Z" fill="#222"/></svg>
<div class="a" style="left:0px;top:561.3px;width:1080px;height:5px;background:#f3f3f3;"></div>
<div class="a" style="left:833.6px;top:560.4px;width:34px;height:6px;background:#c6c6c6;"></div>
<span class="t u" style="left:6px;top:562.5px;">就绪</span>
<span class="t u" style="left:56px;top:562.5px;">辅助功能: 调查</span>
<svg class="a" style="left:844px;top:565px" width="13" height="8" viewBox="0 0 13 8"><rect x="0.5" y="0.5" width="12" height="10" fill="none" stroke="#444" stroke-width="1"/><path d="M4.5 0.5 V10 M8.5 0.5 V10" stroke="#444" stroke-width="0.8"/></svg>
<svg class="a" style="left:877.5px;top:565px" width="13" height="8" viewBox="0 0 13 8"><rect x="0.5" y="0.5" width="12" height="10" fill="none" stroke="#555" stroke-width="1"/></svg>
<svg class="a" style="left:911.5px;top:565px" width="13" height="8" viewBox="0 0 13 8"><rect x="0.5" y="0.5" width="12" height="10" fill="none" stroke="#555" stroke-width="1"/><path d="M6.5 0.5 V10" stroke="#555" stroke-width="0.8"/></svg>
<div class="a" style="left:990px;top:565.2px;width:4px;height:3px;background:#666;"></div>
<svg class="a" style="left:0px;top:480px" width="260" height="86" viewBox="0 0 260 86"><ellipse cx="130.7" cy="60.8" rx="97" ry="42" fill="none" stroke="#e3242b" stroke-width="1.2"/></svg>
</div>
</body></html>
